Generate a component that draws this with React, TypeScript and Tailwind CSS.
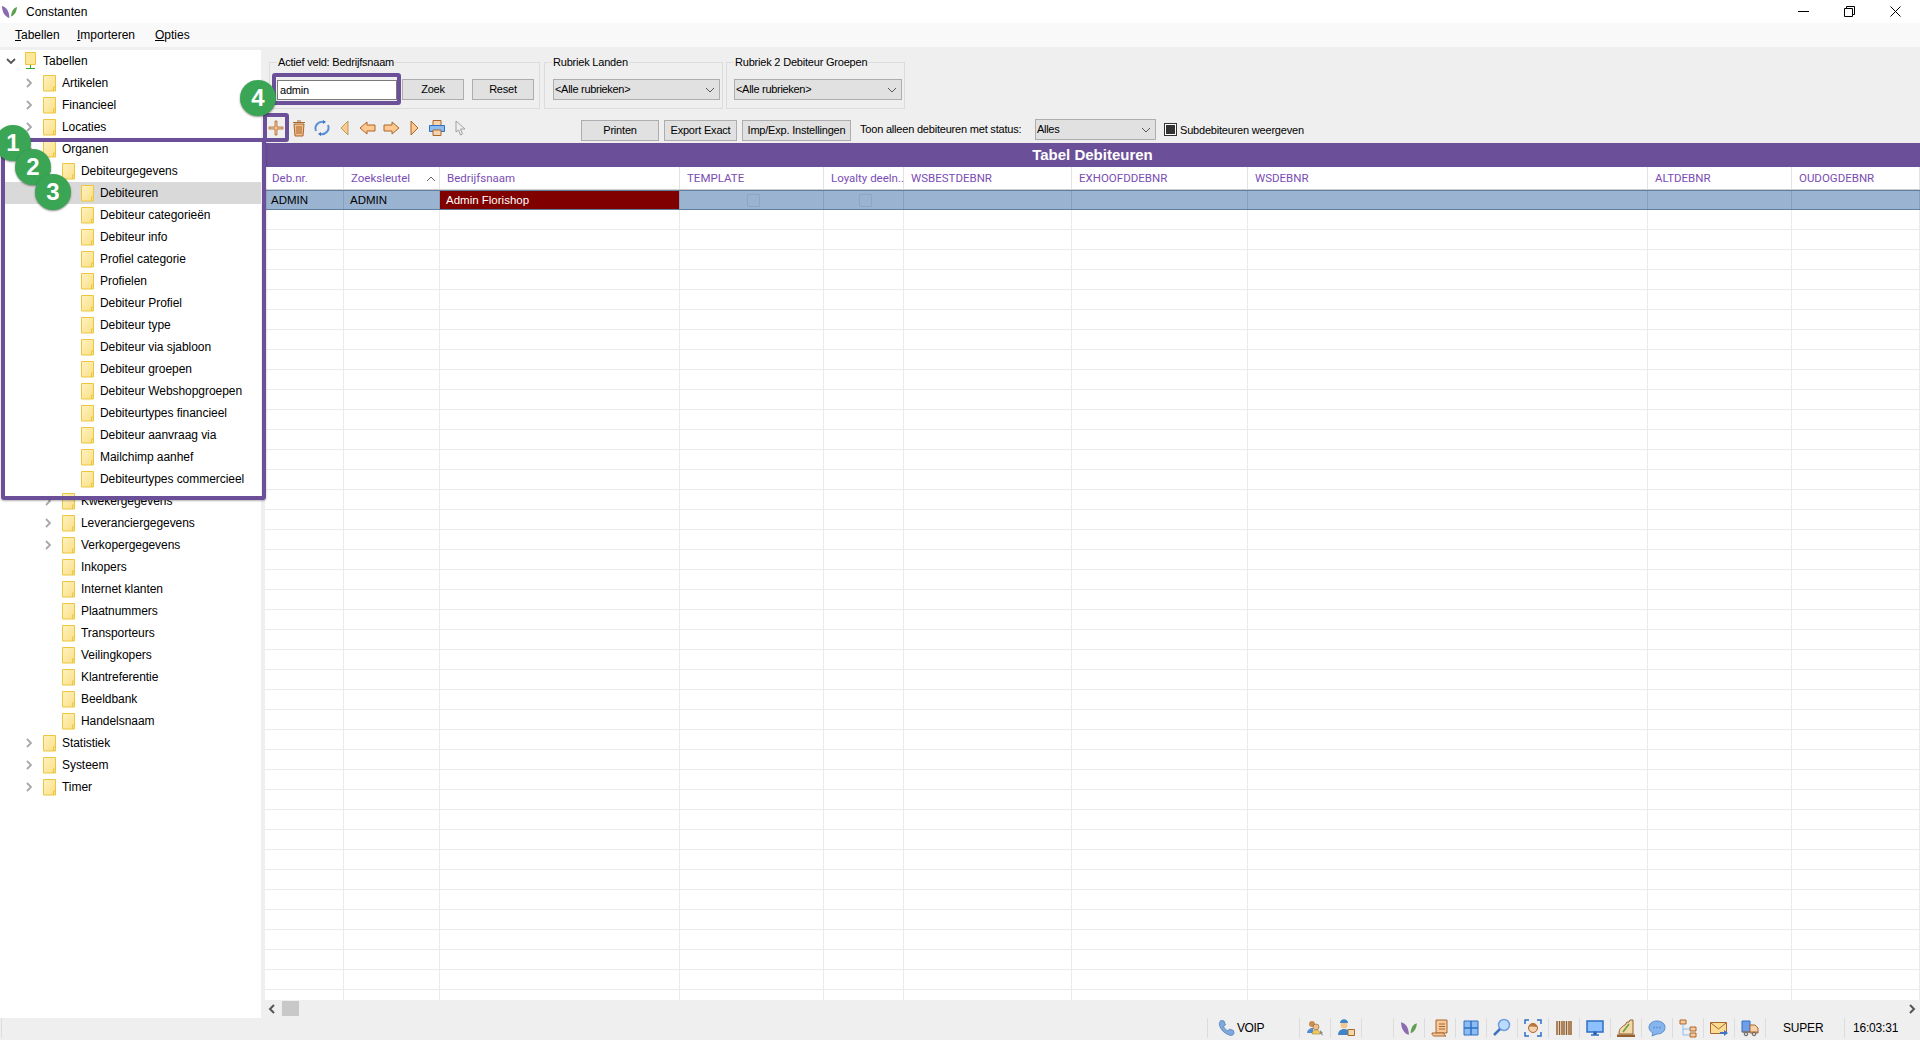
import type { ReactNode } from "react";

type TreeRow = {
  label: string;
  level: 1 | 2 | 3;
  arrow?: boolean;
  selected?: boolean;
};

const treeRows: TreeRow[] = [
  { label: "Artikelen", level: 1, arrow: true },
  { label: "Financieel", level: 1, arrow: true },
  { label: "Locaties", level: 1, arrow: true },
  { label: "Organen", level: 1, arrow: true },
  { label: "Debiteurgegevens", level: 2, arrow: true },
  { label: "Debiteuren", level: 3, selected: true },
  { label: "Debiteur categorieën", level: 3 },
  { label: "Debiteur info", level: 3 },
  { label: "Profiel categorie", level: 3 },
  { label: "Profielen", level: 3 },
  { label: "Debiteur Profiel", level: 3 },
  { label: "Debiteur type", level: 3 },
  { label: "Debiteur via sjabloon", level: 3 },
  { label: "Debiteur groepen", level: 3 },
  { label: "Debiteur Webshopgroepen", level: 3 },
  { label: "Debiteurtypes financieel", level: 3 },
  { label: "Debiteur aanvraag via", level: 3 },
  { label: "Mailchimp aanhef", level: 3 },
  { label: "Debiteurtypes commercieel", level: 3 },
  { label: "Kwekergegevens", level: 2, arrow: true },
  { label: "Leveranciergegevens", level: 2, arrow: true },
  { label: "Verkopergegevens", level: 2, arrow: true },
  { label: "Inkopers", level: 2 },
  { label: "Internet klanten", level: 2 },
  { label: "Plaatnummers", level: 2 },
  { label: "Transporteurs", level: 2 },
  { label: "Veilingkopers", level: 2 },
  { label: "Klantreferentie", level: 2 },
  { label: "Beeldbank", level: 2 },
  { label: "Handelsnaam", level: 2 },
  { label: "Statistiek", level: 1, arrow: true },
  { label: "Systeem", level: 1, arrow: true },
  { label: "Timer", level: 1, arrow: true },
];

const indent = { 1: "w-[43px]", 2: "w-[62px]", 3: "w-[81px]" };

const columns = [
  { name: "Deb.nr.", w: "w-[79px]" },
  { name: "Zoeksleutel", w: "w-[96px]" },
  { name: "Bedrijfsnaam", w: "w-[240px]" },
  { name: "TEMPLATE", w: "w-[144px]" },
  { name: "Loyalty deeln..", w: "w-[80px]" },
  { name: "WSBESTDEBNR", w: "w-[168px]" },
  { name: "EXHOOFDDEBNR", w: "w-[176px]" },
  { name: "WSDEBNR", w: "w-[400px]" },
  { name: "ALTDEBNR", w: "w-[144px]" },
  { name: "OUDOGDEBNR", w: "w-[128px]" },
];

const emptyRows = Array.from({ length: 40 }, (_, i) => i);

function Leaf({ size = 18 }: { size?: number }) {
  return (
    <svg width={size} height={size} viewBox="0 0 18 18">
      <path d="M1 3c4 1 7 4 7.500 12C4 14 1 9 1 3z" fill="#8a6bb0" />
      <path d="M16 4c-3 1-5.500 3-6 9.500 3.500-1 5.500-4.500 6-9.500z" fill="#5f9f52" />
    </svg>
  );
}

function Folder() {
  return (
    <svg width="14" height="17" viewBox="0 0 14 17" className="shrink-0">
      <defs>
        <linearGradient id="fld" x1="0" y1="0" x2="1" y2="1">
          <stop offset="0" stopColor="#fff2c0" />
          <stop offset="1" stopColor="#fbdf85" />
        </linearGradient>
      </defs>
      <path d="M.5.500h12v15.500H.5z" fill="url(#fld)" stroke="#ecc63f" />
      <path d="M10.500 16v-4h2.500" fill="none" stroke="#ecc63f" />
    </svg>
  );
}

function Chevron({ down }: { down?: boolean }) {
  return (
    <svg width="10" height="10" viewBox="0 0 10 10" className="shrink-0">
      {down ? (
        <path d="M1 3l4 4 4-4" fill="none" stroke="#555" strokeWidth="1.800" />
      ) : (
        <path d="M3 1l4 4-4 4" fill="none" stroke="#a8a8a8" strokeWidth="1.800" />
      )}
    </svg>
  );
}

function Caret() {
  return (
    <svg width="10" height="6" viewBox="0 0 10 6" className="ml-auto mr-[3px] shrink-0">
      <path d="M1 5l4-4 4 4" fill="none" stroke="#666" />
    </svg>
  );
}

function Tool({ children }: { children: ReactNode }) {
  return (
    <div className="w-[23px] h-[22px] -mt-[3px] flex items-center justify-center shrink-0">
      <svg width="18" height="18" viewBox="0 0 18 18">
        {children}
      </svg>
    </div>
  );
}

const tan = "#ffc88f";
const brown = "#a8672f";

function Toolbar() {
  return (
    <>
      <Tool>
        <path d="M8 2h2v6h6v2h-6v6H8v-6H2V8h6z" fill={tan} stroke={brown} strokeWidth=".8" />
      </Tool>
      <Tool>
        <path d="M4 5h10l-1 12H5z" fill="#f3bd8c" stroke={brown} />
        <path d="M3 3.500h12M7 2h4M7 7v8M9 7v8M11 7v8" stroke={brown} fill="none" />
      </Tool>
      <Tool>
        <path d="M3 12C1 7 5 2 11 3" fill="none" stroke="#5b8fd8" strokeWidth="2" />
        <path d="M15 6c2 5-2 10-8 9" fill="none" stroke="#5b8fd8" strokeWidth="2" />
        <path d="M10 1l3 2-3 2zM8 13l-3 2 3 2z" fill="#3f74c4" />
      </Tool>
      <Tool>
        <path d="M12 2v14L5 9z" fill={tan} stroke="#b0a060" />
      </Tool>
      <Tool>
        <path d="M8 3v3h8v6H8v3L1 9z" fill={tan} stroke={brown} />
      </Tool>
      <Tool>
        <path d="M10 3v3H2v6h8v3l7-6z" fill={tan} stroke={brown} />
      </Tool>
      <Tool>
        <path d="M6 2v14l7-7z" fill={tan} stroke={brown} />
      </Tool>
      <Tool>
        <path d="M5 1.500h8v5H5z" fill="#f6d3ad" stroke={brown} />
        <path d="M1.500 6.500h15v6h-15z" fill="#8dbcf2" stroke="#2f6fc4" />
        <path d="M5 11h8v5.500H5z" fill="#f6d3ad" stroke={brown} />
      </Tool>
      <Tool>
        <path d="M5 2l9 8H9.500l2 5-2 1-2-5L5 13z" fill="#efefef" stroke="#a0a0a0" />
      </Tool>
    </>
  );
}

function StatusIcon({ children }: { children: ReactNode }) {
  return (
    <div className="w-[31px] h-[20px] border-l border-[#dcdcdc] flex items-center justify-center shrink-0">
      <svg width="20" height="20" viewBox="0 0 20 20">
        {children}
      </svg>
    </div>
  );
}

function StatusIcons() {
  return (
    <>
      <StatusIcon>
        <circle cx="7" cy="6" r="3" fill="#c98d52" />
        <circle cx="11" cy="9" r="3" fill="#eec08a" stroke="#8a5a2a" strokeWidth=".6" />
        <path d="M2 15c0-3 3-5 6-5v5z" fill="#4f8ad8" />
        <path d="M7 16c0-3 2-4 4-4s4 1 4 4z" fill="#f0c95a" stroke="#8a7a30" strokeWidth=".5" />
        <path d="M15 12l3 3-1 0 1 2-1 .500-1-2-1 1z" fill="#888" />
      </StatusIcon>
      <StatusIcon>
        <circle cx="8" cy="7" r="3.500" fill="#f2c890" />
        <path d="M4 5c0-5 8-5 8 0z" fill="#3f86c8" />
        <path d="M2 17c0-4 3-6 6-6s5 1 5 3v3z" fill="#3f86c8" />
        <path d="M12 11.500h6.500v6H12z" fill="#f3d9a8" stroke="#a8672f" />
      </StatusIcon>
      <div className="w-[32px] h-[20px] border-l border-[#dcdcdc] shrink-0" />
      <div className="w-[31px] h-[20px] border-l border-[#dcdcdc] flex items-center justify-center shrink-0">
        <Leaf size={19} />
      </div>
      <StatusIcon>
        <path d="M6 2h11v13H6z" fill="#f6c99a" stroke={brown} />
        <path d="M9 6h6M9 8.500h6M9 11h6" stroke={brown} />
        <path d="M2 15h12c0 2 1 3 2 3H4c-1 0-2-1-2-3z" fill="#f6c99a" stroke={brown} />
      </StatusIcon>
      <StatusIcon>
        <path d="M3 3h14v14H3z" fill="#8dbcf2" stroke="#2f6fc4" />
        <path d="M10 3v14M3 10h14" stroke="#2f6fc4" strokeWidth="1.500" />
      </StatusIcon>
      <StatusIcon>
        <circle cx="12" cy="7" r="5.500" fill="#bcdcff" stroke="#6e9fdc" strokeWidth="1.500" />
        <path d="M8 11l-6 6" stroke="#3f74c4" strokeWidth="2.500" />
      </StatusIcon>
      <StatusIcon>
        <path d="M2 6V2h4M14 2h4v4M18 14v4h-4M6 18H2v-4" fill="none" stroke="#2f6fc4" strokeWidth="1.500" />
        <circle cx="10" cy="10" r="4.500" fill="#f4d2b0" stroke="#a8672f" />
        <path d="M6 9c0-5 8-5 8 0-3 0-5-1-8 0z" fill="#b8763a" />
      </StatusIcon>
      <StatusIcon>
        <path d="M3 3v14M5.500 3v14M8 3v14M10 3v14M12.500 3v14M15 3v14M17 3v14" stroke="#96602e" strokeWidth="1.500" />
      </StatusIcon>
      <StatusIcon>
        <path d="M2 3h16v11H2z" fill="#8dc0ff" stroke="#2f6fc4" strokeWidth="1.500" />
        <path d="M9 14h2v3H9zM6 17h8" stroke="#2f6fc4" strokeWidth="1.500" />
      </StatusIcon>
      <StatusIcon>
        <path d="M3 16c0-5 2-7 6-9l2-3h2l1-2h3v14z" fill="#f3d9a8" stroke="#96602e" />
        <path d="M1 16.500h18V19H1z" fill="#96602e" />
        <path d="M7 14l6-8" stroke="#6aa040" strokeWidth="1.500" />
      </StatusIcon>
      <StatusIcon>
        <path d="M10 3c5 0 8 3 8 6.500S15 16 10 16l-5 2 1-3c-2-1-4-3-4-5.500C2 6 5 3 10 3z" fill="#86b4ec" stroke="#5a8fd0" />
        <path d="M6.500 9.500h1M9.500 9.500h1M12.500 9.500h1" stroke="#3f74c4" strokeWidth="1.500" />
      </StatusIcon>
      <StatusIcon>
        <path d="M2 2h6v4H2zM12 9h6v4h-6zM12 15h6v4h-6z" fill="#f6c99a" stroke={brown} />
        <path d="M5 6v5h7M5 11v6h7" fill="none" stroke="#8dbcf2" />
      </StatusIcon>
      <StatusIcon>
        <path d="M1.500 4.500h16v11h-16z" fill="#fbdc92" stroke={brown} />
        <path d="M2 5l7.500 6L17 5" fill="none" stroke={brown} />
        <path d="M11 14h4v-2l4 3-4 3v-2h-4z" fill="#3f74c4" />
      </StatusIcon>
      <StatusIcon>
        <path d="M2 3h8v11H2z" fill="#6e9fe8" stroke="#2f6fc4" />
        <path d="M10 7h5l3 3v5H10z" fill="#f6d3ad" stroke={brown} />
        <path d="M2 14h16" stroke="#a8672f" />
        <circle cx="6" cy="16" r="1.800" fill="#ccc" stroke="#666" />
        <circle cx="14" cy="16" r="1.800" fill="#ccc" stroke="#666" />
      </StatusIcon>
    </>
  );
}

function Badge({ n, className }: { n: number; className: string }) {
  return (
    <div
      className={`absolute w-[36px] h-[36px] rounded-full bg-[#3aa655] text-white font-bold text-[24px] flex items-center justify-center shadow-[0_1px_2px_rgba(0,0,0,0.45)] ${className}`}
    >
      {n}
    </div>
  );
}

function Combo({ label, className }: { label: string; className: string }) {
  return (
    <div className={`h-[21px] bg-[#e1e1e1] border border-[#adadad] flex items-center pl-[1px] pr-[4px] justify-between text-[11px] tracking-[-0.3px] ${className}`}>
      <span>{label}</span>
      <svg width="10" height="6" viewBox="0 0 10 6">
        <path d="M1 1l4 4 4-4" fill="none" stroke="#555" />
      </svg>
    </div>
  );
}

function Btn({ label, className }: { label: string; className: string }) {
  return (
    <button
      type="button"
      className={`h-[21px] bg-[#e1e1e1] border border-[#adadad] flex items-center justify-center shrink-0 text-[11px] tracking-[-0.2px] whitespace-nowrap ${className}`}
    >
      {label}
    </button>
  );
}

export default function App() {
  return (
    <div className="relative w-[1920px] h-[1040px] overflow-hidden flex flex-col bg-[#efefef] text-black text-[12px] font-['Liberation_Sans',sans-serif]">
      {/* title bar */}
      <div className="h-[23px] bg-white flex items-center shrink-0">
        <div className="ml-[1px] w-[25px]">
          <Leaf />
        </div>
        <span>Constanten</span>
        <div className="ml-auto flex items-center">
          <div className="w-[11px] h-px bg-black mr-[35px]" />
          <svg width="11" height="11" viewBox="0 0 11 11" className="mr-[35px]">
            <path d="M.5 2.500h8v8h-8zM2.500 2.500v-2h8v8h-2" fill="none" stroke="#000" />
          </svg>
          <svg width="11" height="11" viewBox="0 0 11 11" className="mr-[19px]">
            <path d="M.5.500l10 10M10.500.500l-10 10" stroke="#000" />
          </svg>
        </div>
      </div>

      {/* menu */}
      <div className="h-[24px] bg-[#f9f9f9] flex items-center shrink-0 pl-[15px]">
        <span className="w-[62px]"><u>T</u>abellen</span>
        <span className="w-[78px]"><u>I</u>mporteren</span>
        <span><u>O</u>pties</span>
      </div>

      <div className="flex-1 min-h-0 flex pt-[3px]">
        {/* tree */}
        <div className="w-[261px] bg-white shrink-0">
          <div className="h-[22px] flex items-center pl-[6px]">
            <Chevron down />
            <svg width="12" height="18" viewBox="0 0 12 18" className="ml-[9px] mr-[6px]">
              <path d="M.5.500h10v12H.5z" fill="#fde79a" stroke="#ecc63f" />
              <path d="M5.500 13v3M1 16.500h9" stroke="#2fa82f" />
            </svg>
            Tabellen
          </div>
          {treeRows.map((r) => (
            <div
              key={r.label}
              className={`h-[22px] flex items-center ${r.selected ? "bg-[#d9d9d9] ml-[5px]" : ""}`}
            >
              <div className={`${r.selected ? "w-[76px]" : indent[r.level]} shrink-0 flex justify-end pr-[9px]`}>
                {r.arrow && <Chevron />}
              </div>
              <Folder />
              <span className="ml-[5px] tracking-[-0.05px]">{r.label}</span>
            </div>
          ))}
        </div>

        {/* main */}
        <div className="flex-1 min-w-0 flex flex-col">
          <div className="flex pl-[8px] pt-[5px] shrink-0 text-[11px] tracking-[-0.2px]">
            <fieldset className="w-[271px] h-[54px] border border-[#dcdcdc] pl-[7px]">
              <legend className="px-[1px] leading-[14px]">Actief veld: Bedrijfsnaam</legend>
              <div className="flex items-center mt-[10px]">
                <input
                  readOnly
                  value="admin"
                  className="w-[120px] h-[20px] bg-white border border-[#7a7a7a] px-[2px] outline-none"
                />
                <Btn label="Zoek" className="w-[62px] ml-[5px]" />
                <Btn label="Reset" className="w-[62px] ml-[8px]" />
              </div>
            </fieldset>
            <fieldset className="w-[179px] h-[54px] border border-[#dcdcdc] ml-[4px] pl-[8px]">
              <legend className="-ml-[1px] px-[1px] leading-[14px]">Rubriek Landen</legend>
              <Combo label="<Alle rubrieken>" className="w-[167px] mt-[10px]" />
            </fieldset>
            <fieldset className="w-[179px] h-[54px] border border-[#dcdcdc] ml-[3px] pl-[7px]">
              <legend className="px-[1px] leading-[14px]">Rubriek 2 Debiteur Groepen</legend>
              <Combo label="<Alle rubrieken>" className="w-[168px] mt-[10px]" />
            </fieldset>
          </div>

          <div className="h-[34px] flex items-start pl-[3px] pt-[11px] shrink-0 text-[11px] tracking-[-0.2px]">
            <Toolbar />
            <Btn label="Printen" className="w-[78px] ml-[110px]" />
            <Btn label="Export Exact" className="w-[73px] ml-[5px]" />
            <Btn label="Imp/Exp. Instellingen" className="w-[109px] ml-[5px]" />
            <span className="ml-[9px] w-[175px] h-[19px] flex items-center shrink-0 whitespace-nowrap">Toon alleen debiteuren met status:</span>
            <Combo label="Alles" className="w-[121px] shrink-0 -mt-[1px]" />
            <span className="w-[13px] h-[13px] border border-[#333] bg-white ml-[8px] mt-[3px] flex items-center justify-center shrink-0">
              <span className="w-[9px] h-[9px] bg-[#333]" />
            </span>
            <span className="ml-[3px] h-[20px] flex items-center whitespace-nowrap">Subdebiteuren weergeven</span>
          </div>

          {/* grid */}
          <div className="flex-1 min-h-0 ml-[4px] bg-white overflow-hidden flex flex-col">
            <div className="h-[24px] bg-[#6b5099] text-white font-bold text-[15px] flex items-center justify-center shrink-0">
              Tabel Debiteuren
            </div>
            <div className="h-[23px] flex shrink-0 border-b border-[#cfcfcf]">
              {columns.map((c) => (
                <div key={c.name} className={`${c.w} shrink-0 flex items-center pl-[7px] pt-[2px] border-r border-[#e3e3e3] text-[#7a4db5] whitespace-nowrap font-['Roboto',sans-serif] text-[11.5px]`}>
                  {c.name}
                  {c.name === "Zoeksleutel" && <Caret />}
                </div>
              ))}
            </div>
            <div className="h-[20px] flex shrink-0 bg-[#9ab3d1] border-y border-[#5f7f9f]">
              {columns.map((c) => (
                <div key={c.name} className={`${c.w} shrink-0 flex items-center pl-[6px] pt-[1px] border-r border-[#87a0bf] text-[11.5px] ${c.name === "Bedrijfsnaam" ? "bg-[#800000] text-white" : ""} ${c.name === "TEMPLATE" || c.name === "Loyalty deeln.." ? "justify-center pl-0" : ""}`}>
                  {c.name === "Deb.nr." && "ADMIN"}
                  {c.name === "Zoeksleutel" && "ADMIN"}
                  {c.name === "Bedrijfsnaam" && "Admin Florishop"}
                  {(c.name === "TEMPLATE" || c.name === "Loyalty deeln..") && (
                    <span className="w-[13px] h-[13px] -ml-[3px] border border-[#8ea6c4] rounded-[1px]" />
                  )}
                </div>
              ))}
            </div>
            {emptyRows.map((i) => (
              <div key={i} className="h-[20px] flex shrink-0 border-b border-[#ebebeb]">
                {columns.map((c) => (
                  <div key={c.name} className={`${c.w} shrink-0 border-r border-[#ebebeb]`} />
                ))}
              </div>
            ))}
          </div>

          {/* horizontal scrollbar */}
          <div className="h-[15px] mt-[1px] mb-[2px] ml-[4px] flex items-center shrink-0">
            <svg width="8" height="10" viewBox="0 0 8 10" className="ml-[3px]">
              <path d="M6 1L2 5l4 4" fill="none" stroke="#555" strokeWidth="2" />
            </svg>
            <div className="w-[17px] h-[15px] bg-[#c8c8c8] ml-[6px]" />
            <svg width="8" height="10" viewBox="0 0 8 10" className="ml-auto mr-[4px]">
              <path d="M2 1l4 4-4 4" fill="none" stroke="#555" strokeWidth="2" />
            </svg>
          </div>
        </div>
      </div>

      {/* status bar */}
      <div className="h-[22px] flex items-center shrink-0 pl-[1px] pb-[2px]">
        <div className="w-[1206px] h-[20px] border-l border-[#dcdcdc] shrink-0" />
        <div className="w-[92px] h-[20px] border-l border-[#dcdcdc] flex items-center pl-[10px] shrink-0 tracking-[-0.4px]">
          <svg width="18" height="18" viewBox="0 0 18 18" className="mr-[1px]">
            <path d="M3 1.500l3 .500 1.500 4-2 1.500c1 2 2.500 3.500 4.500 4.500L11.500 10l4 1.500.500 3c-1 2-3 2.500-5 1.500C6 14 3 11 1.500 6.500 1 4 1.500 2.500 3 1.500z" fill="#7fa8dc" stroke="#4f80bd" strokeWidth=".8" />
          </svg>
          VOIP
        </div>
        <StatusIcons />
        <div className="w-[79px] h-[20px] border-l border-[#dcdcdc] pl-[17px] flex items-center shrink-0 tracking-[-0.2px]">SUPER</div>
        <div className="w-[73px] h-[20px] border-l border-[#dcdcdc] pl-[8px] flex items-center shrink-0 tracking-[-0.2px]">16:03:31</div>
      </div>

      {/* help annotations over the screen */}
      <div className="absolute left-[1px] top-[138px] w-[265px] h-[362px] border-[4px] border-[#6b5099] rounded-[3px] shadow-[0_1px_2px_rgba(0,0,0,0.3)]" />
      <div className="absolute left-[272px] top-[73px] w-[129px] h-[32px] border-[4px] border-[#6b5099] rounded-[3px]" />
      <div className="absolute left-[263px] top-[113px] w-[26px] h-[29px] border-[4px] border-[#6b5099] rounded-[3px]" />
      <Badge n={1} className="left-[-5px] top-[125px]" />
      <Badge n={2} className="left-[15px] top-[149px]" />
      <Badge n={3} className="left-[35px] top-[174px]" />
      <Badge n={4} className="left-[240px] top-[80px]" />
    </div>
  );
}
